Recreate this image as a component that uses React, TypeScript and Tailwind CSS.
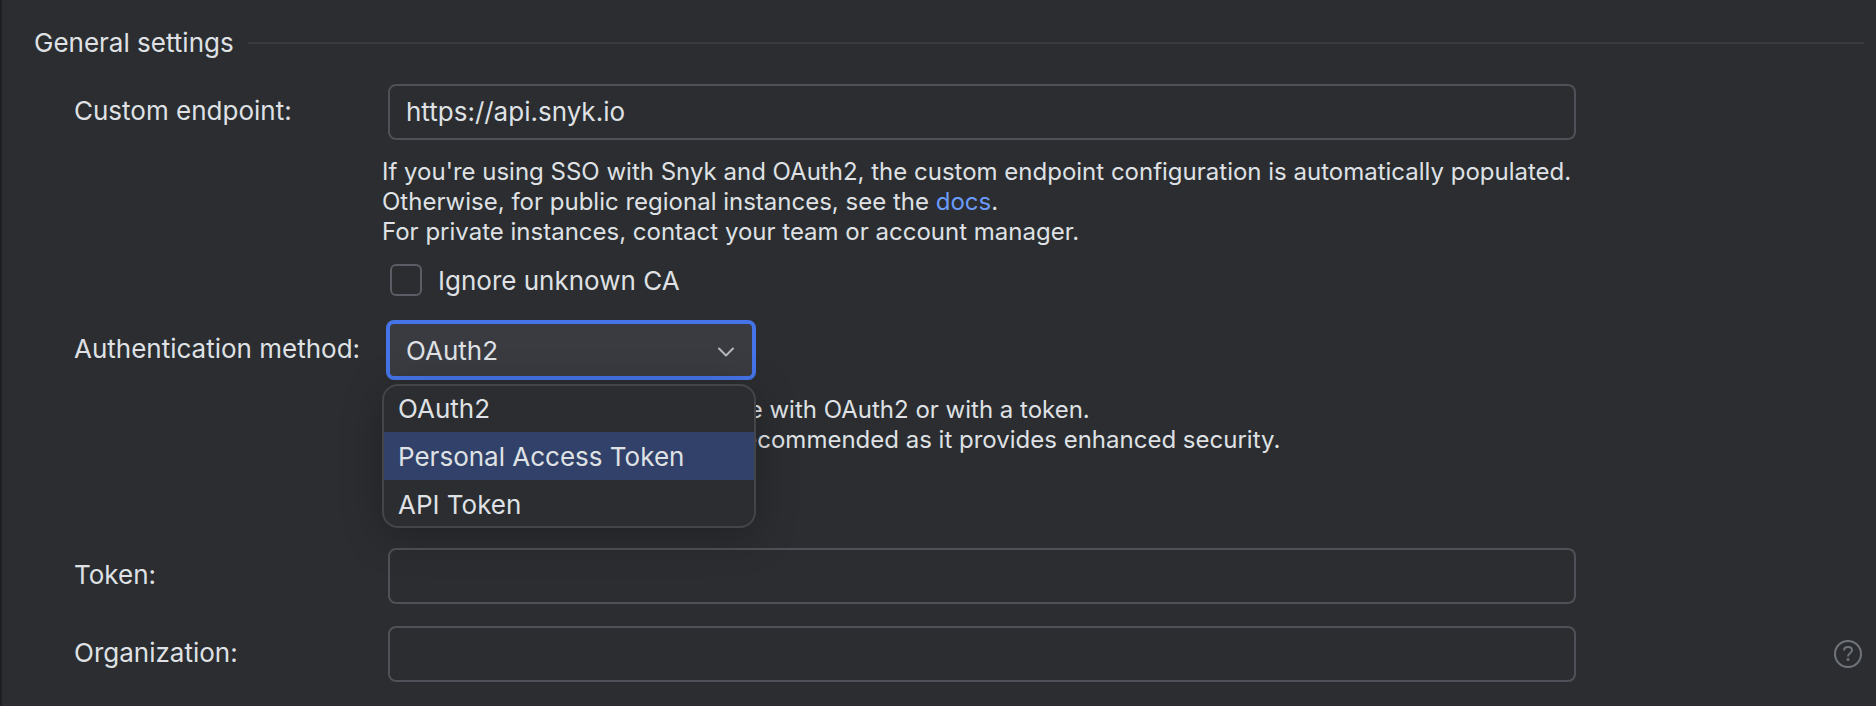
import { useState } from "react";
import type { ReactNode } from "react";

const METHODS = ["OAuth2", "Personal Access Token", "API Token"];

const INPUT =
  "block h-14 w-full rounded-lg border-2 border-[#4e5157] bg-transparent px-4 pb-0.5 text-[26px] text-[#dfe1e5] outline-none";

function Row({ id, label, height, children }: { id: string; label: string; height: string; children: ReactNode }) {
  return (
    <div className="grid grid-cols-[308px_minmax(0,1fr)]">
      <label htmlFor={id} className={"flex items-center pb-0.5 " + height}>
        {label}
      </label>
      <div>{children}</div>
    </div>
  );
}

function HelpIcon() {
  return (
    <svg width="28" height="28" viewBox="0 0 28 28" fill="none" stroke="#6f737a" aria-hidden="true">
      <circle cx="14" cy="14" r="13" strokeWidth="2" />
      <path
        d="M10 10.4C10.1 8.3 11.7 7 14 7s4 1.3 4 3.3c0 1.6-.9 2.3-2.2 3.2-1.2.8-1.8 1.4-1.8 3"
        strokeWidth="2"
      />
      <circle cx="14" cy="19.6" r="1.5" fill="#6f737a" stroke="none" />
    </svg>
  );
}

export default function App() {
  const [endpoint, setEndpoint] = useState("https://api.snyk.io");
  const [method, setMethod] = useState("OAuth2");
  const [highlighted, setHighlighted] = useState("Personal Access Token");

  return (
    <main className="min-h-screen border-l-2 border-[#1e1f22] bg-[#2b2d30] font-['Inter',sans-serif] text-[26px] leading-9 text-[#dfe1e5]">
      <form className="pt-[25px] pr-3 pb-6 pl-8">
        <header className="flex items-center gap-3.5">
          <h1>General settings</h1>
          <div className="h-0.5 flex-1 bg-[#393b40]" />
        </header>

        <div className="mt-[23px] pl-10">
          <div className="pr-[288px]">
            <Row id="endpoint" label="Custom endpoint:" height="h-14">
              <div className="pl-1.5">
                <input
                  id="endpoint"
                  type="text"
                  className={INPUT}
                  value={endpoint}
                  onChange={(e) => setEndpoint(e.target.value)}
                />
              </div>
              <p className="mt-[17px] text-2xl leading-[30px] whitespace-nowrap">
                If you're using SSO with Snyk and OAuth2, the custom endpoint configuration is automatically populated.
                <br />
                Otherwise, for public regional instances, see the{" "}
                <a href="#docs" className="text-[#6b9bfa]">
                  docs
                </a>
                .
                <br />
                For private instances, contact your team or account manager.
              </p>
              <label className="mt-[15px] flex h-9 items-center gap-4 pl-2">
                <input
                  type="checkbox"
                  className="size-8 appearance-none rounded-md border-2 border-[#5a5d63] checked:bg-[#3574f0]"
                />
                <span className="pt-0.5">Ignore unknown CA</span>
              </label>
            </Row>

            <div className="mt-[22px]">
              <Row id="method" label="Authentication method:" height="h-[60px]">
                <div className="relative w-[374px] pl-1">
                  <select
                    id="method"
                    className="block h-[60px] w-full appearance-none rounded-lg border-4 border-[#4574e8] bg-[#393b40] px-4 pt-0.5 text-[26px] outline-none"
                    value={method}
                    onChange={(e) => setMethod(e.target.value)}
                  >
                    {METHODS.map((m) => (
                      <option key={m}>{m}</option>
                    ))}
                  </select>
                  <svg
                    className="pointer-events-none absolute top-6 right-5"
                    width="20"
                    height="16"
                    viewBox="0 0 20 16"
                    fill="none"
                    stroke="#b4b8bf"
                    strokeWidth="2"
                    strokeLinecap="round"
                    strokeLinejoin="round"
                    aria-hidden="true"
                  >
                    <path d="M3 4.5 10 11.5 17 4.5" />
                  </svg>
                  <ul
                    role="listbox"
                    aria-label="Authentication method"
                    className="absolute top-full left-0 z-10 mt-1 w-full overflow-hidden rounded-2xl border-2 border-[#43454a] bg-[#2b2d30] shadow-[0_8px_40px_rgba(0,0,0,0.25)]"
                  >
                    {METHODS.map((m) => (
                      <li
                        key={m}
                        role="option"
                        aria-selected={m === highlighted}
                        onMouseEnter={() => setHighlighted(m)}
                        onClick={() => setMethod(m)}
                        className={
                          "flex h-12 items-center px-3.5 pt-0.5 first:h-[46px] first:pt-0 last:h-[46px] last:pt-1 " +
                          (m === highlighted ? "bg-[#314169]" : "")
                        }
                      >
                        {m}
                      </li>
                    ))}
                  </ul>
                </div>
                <p className="mt-[15px] text-2xl leading-[30px] whitespace-nowrap">
                  Specifies whether to authenticate with OAuth2 or with a token.
                  <br />
                  Note: OAuth2 authentication is recommended as it provides enhanced security.
                </p>
              </Row>
            </div>
          </div>

          <div className="mt-[93px] pr-[288px]">
            <Row id="token" label="Token:" height="h-14">
              <div className="pl-1.5">
                <input id="token" type="text" className={INPUT} />
              </div>
            </Row>
          </div>

          <div className="mt-[22px] flex items-center justify-between pr-0.5">
            <div className="mr-[258px] flex-1">
              <Row id="organization" label="Organization:" height="h-14">
                <div className="pl-1.5">
                  <input id="organization" type="text" className={INPUT} />
                </div>
              </Row>
            </div>
            <button type="button" aria-label="Help">
              <HelpIcon />
            </button>
          </div>
        </div>
      </form>
    </main>
  );
}
